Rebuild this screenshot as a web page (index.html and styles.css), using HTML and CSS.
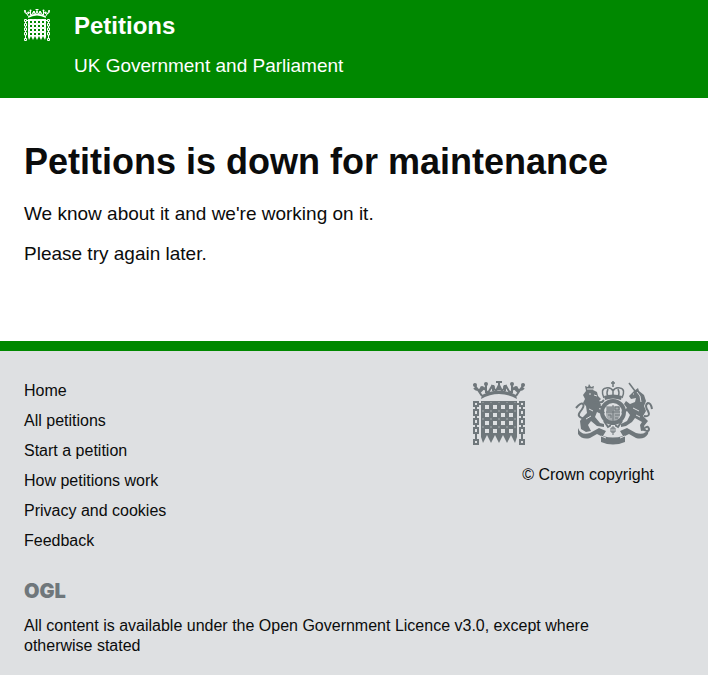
FILE: index.html
```
<!DOCTYPE html>
<html lang="en">
<head>
  <meta charset="UTF-8">
  <meta name="viewport" content="width=device-width, initial-scale=1.0">
  <title>Petitions is down for maintenance</title>
  <link rel="stylesheet" href="styles.css">
</head>
<body>
  <svg class="symbols" aria-hidden="true">
    <symbol id="portcullis" viewBox="0 0 52 64">
      <!-- crown -->
      <path d="M8 18Q26 8 44 18L43 14Q26 5 9 14Z" fill="currentColor"/>
      <path d="M9 15L1 3M43 15L51 3M13 12L13 2M39 12L39 2M20 10L20 4M32 10L32 4M26 9V1M23 1H29M1 7Q5 11 9 7M51 7Q47 11 43 7M7 11L11 7L15 12L19 5L23 10L26 4L29 10L33 5L37 12L41 7L45 11" fill="none" stroke="currentColor" stroke-width="2"/>
      <g fill="currentColor"><circle cx="2" cy="4" r="2"/><circle cx="50" cy="4" r="2"/><circle cx="9" cy="7" r="2"/><circle cx="43" cy="7" r="2"/><circle cx="13" cy="3" r="2"/><circle cx="39" cy="3" r="2"/><circle cx="20" cy="6" r="2"/><circle cx="32" cy="6" r="2"/></g>
      <!-- gate -->
      <path fill="currentColor" fill-rule="evenodd" d="M8 20H44V56L42 62L38 54L34 62L30 54L26 62L22 54L18 62L14 54L10 62L8 56ZM12 24h4v4h-4zM20 24h4v4h-4zM28 24h4v4h-4zM36 24h4v4h-4zM12 32h4v4h-4zM20 32h4v4h-4zM28 32h4v4h-4zM36 32h4v4h-4zM12 40h4v4h-4zM20 40h4v4h-4zM28 40h4v4h-4zM36 40h4v4h-4zM12 48h4v4h-4zM20 48h4v4h-4zM28 48h4v4h-4zM36 48h4v4h-4zM9.500 21.500h1v1h-1zM17.500 21.500h1v1h-1zM25.500 21.500h1v1h-1zM33.500 21.500h1v1h-1zM41.500 21.500h1v1h-1zM9.500 29.500h1v1h-1zM17.500 29.500h1v1h-1zM25.500 29.500h1v1h-1zM33.500 29.500h1v1h-1zM41.500 29.500h1v1h-1zM9.500 37.500h1v1h-1zM17.500 37.500h1v1h-1zM25.500 37.500h1v1h-1zM33.500 37.500h1v1h-1zM41.500 37.500h1v1h-1zM9.500 45.500h1v1h-1zM17.500 45.500h1v1h-1zM25.500 45.500h1v1h-1zM33.500 45.500h1v1h-1zM41.500 45.500h1v1h-1z"/>
      <path d="M4 23H48" stroke="currentColor" stroke-width="2"/>
      <!-- chains -->
      <g fill="none" stroke="currentColor" stroke-width="2"><path d="M1 21h4v4h-4zM1 29h4v5h-4zM1 38h4v5h-4zM1 47h4v5h-4zM1 59h4v4h-4zM47 21h4v4h-4zM47 29h4v5h-4zM47 38h4v5h-4zM47 47h4v5h-4zM47 59h4v4h-4z"/><path d="M3 25v4M3 34v4M3 43v4M3 52v7M49 25v4M49 34v4M49 43v4M49 52v7"/></g>
    </symbol>
    <symbol id="royal-arms" viewBox="0 0 78 64">
      <!-- crown -->
      <path d="M38 0v6M36 2h4M29 17Q25 8 31 7Q36 6 38 10Q40 6 45 7Q51 8 47 17M38 8v8M33 8Q31 12 33 16M43 8Q45 12 43 16" fill="none" stroke="currentColor" stroke-width="1.500"/>
      <path d="M29 15Q38 12 47 15L46 19Q38 16 30 19Z" fill="currentColor"/>
      <!-- garter and shield -->
      <circle cx="38" cy="31" r="11" fill="none" stroke="currentColor" stroke-width="4"/>
      <path d="M31 25h14v8q0 6-7 8q-7-2-7-8z" fill="currentColor" opacity=".5"/>
      <path d="M38 24v17M31 31h14M32 27h5M32 29h5M40 26h4v3h-4zM33 34h3v3M40 34h5M40 37h3" fill="none" stroke="currentColor"/>
      <path d="M29 40L33 46L38 43L43 46L47 40" fill="none" stroke="currentColor" stroke-width="2"/>
      <!-- lion -->
      <path d="M11 10L10 5L13 6L14 3L16 6L19 5L18 9L22 11L23 15L26 18L24 20L26 24L24 28L30 31L28 34L22 31L20 36L25 42L29 43V46L22 45L16 40L13 44L16 50L11 51L6 48L5 40L8 36L12 32L11 25L8 22L10 18L8 14Z" fill="currentColor"/>
      <path d="M18 22L27 21L29 19M20 26L27 26" fill="none" stroke="currentColor" stroke-width="2"/>
      <path d="M10 38Q1 36 5 31Q10 25 8 23Q6 21 1 27" fill="none" stroke="currentColor" stroke-width="2"/>
      <path d="M12 8h6M14 13h2M19 14l3 1M14 28l4 2M11 38l5-3" fill="none" stroke="#dee0e2"/>
      <!-- unicorn -->
      <path d="M54 2L60 10" stroke="currentColor" stroke-width="1.500"/>
      <path d="M59 10L63 7L64 10L69 14L71 20L69 25L71 30L68 35L73 40L69 45L71 49L66 50L65 44L67 41L60 37L57 41L51 45L46 46V43L52 40L55 34L52 30L48 33L46 31L52 27L49 23L51 20L55 23L60 21L61 17L56 18L54 15Z" fill="currentColor"/>
      <path d="M62 11l3 4l1 6M58 27l6 3M61 34l4 2M58 13h1" fill="none" stroke="#dee0e2"/>
      <path d="M69 35Q76 36 73 30Q69 24 73 22Q76 22 77 28M67 48Q74 52 74 48Q73 44 70 47" fill="none" stroke="currentColor" stroke-width="2"/>
      <!-- motto scroll -->
      <path d="M3 47Q6 55 15 52L24 47L31 50L28 55Q38 58 48 55L45 50L52 47L61 52Q70 55 74 47L73 53Q69 59 61 57L54 53L50 55V61Q38 66 26 61V55L22 53L15 57Q7 59 3 53Z" fill="currentColor"/>
      <path d="M26 55L31 57M50 55L45 57" stroke="#dee0e2"/>
      <path d="M38 44v10M35 49h6" stroke="#dee0e2" stroke-width="4"/>
      <path d="M38 45v9M36 47h4v4h-4z" fill="none" stroke="currentColor"/>
    </symbol>
  </svg>

  <header class="header">
    <div class="container header-inner">
      <svg class="header-logo" aria-hidden="true"><use href="#portcullis"/></svg>
      <div>
        <a class="header-title" href="/">Petitions</a>
        <p class="header-tagline">UK Government and Parliament</p>
      </div>
    </div>
  </header>

  <main class="container content">
    <h1>Petitions is down for maintenance</h1>
    <p>We know about it and we're working on it.</p>
    <p>Please try again later.</p>
  </main>

  <footer class="footer">
    <div class="container">
      <div class="footer-top">
        <ul class="footer-nav">
          <li><a href="/">Home</a></li>
          <li><a href="/petitions">All petitions</a></li>
          <li><a href="/petitions/check">Start a petition</a></li>
          <li><a href="/help">How petitions work</a></li>
          <li><a href="/privacy">Privacy and cookies</a></li>
          <li><a href="/feedback">Feedback</a></li>
        </ul>
        <div class="footer-crests">
          <div class="crests">
            <svg class="crest-parliament" role="img" aria-label="UK Parliament"><use href="#portcullis"/></svg>
            <svg class="crest-government" role="img" aria-label="HM Government"><use href="#royal-arms"/></svg>
          </div>
          <p class="copyright">© Crown copyright</p>
        </div>
      </div>
      <div class="licence">
        <span class="ogl">OGL</span>
        <p>All content is available under the Open Government Licence v3.0, except where otherwise stated</p>
      </div>
    </div>
  </footer>
</body>
</html>
```
FILE: styles.css
```
body {
  margin: 0;
  min-height: 100vh;
  display: flex;
  flex-direction: column;
  font-family: "Liberation Sans", Arial, sans-serif;
  font-size: 19px;
  line-height: 25px;
  color: #0b0c0c;
  background-color: #fff;
}
p {
  margin: 0;
}
a {
  color: inherit;
  text-decoration: none;
}
.symbols {
  display: none;
}
.container {
  padding: 0 24px;
}
.header {
  color: #fff;
  background-color: #008800;
  padding: 8px 0 20px;
}
.header-inner {
  display: flex;
  gap: 24px;
}
.header-logo {
  width: 26px;
  height: 34px;
}
.header-title {
  display: block;
  font-size: 24px;
  font-weight: bold;
  line-height: 35px;
  margin-bottom: 10px;
}
.content {
  padding-top: 40px;
  padding-bottom: 75px;
}
.content h1 {
  margin: 0 0 15px;
  font-size: 36px;
  line-height: 48px;
}
.content p + p {
  margin-top: 15px;
}
.footer {
  flex: 1;
  border-top: 10px solid #008800;
  background-color: #dee0e2;
  font-size: 16px;
  line-height: 20px;
  padding: 30px 0 20px;
}
.footer-top {
  display: flex;
  justify-content: space-between;
}
.footer-nav {
  list-style: none;
  margin: 0;
  padding: 0;
}
.footer-nav li {
  margin-bottom: 10px;
}
.footer-crests {
  padding-right: 30px;
  text-align: right;
}
.crests {
  display: flex;
  justify-content: flex-end;
  gap: 50px;
  margin-bottom: 20px;
  padding-right: 1px;
  color: #6f777b;
}
.crest-parliament {
  width: 52px;
  height: 64px;
}
.crest-government {
  width: 78px;
  height: 64px;
}
.licence {
  padding-top: 20px;
}
.ogl {
  display: block;
  margin-bottom: 15px;
  color: #6f777b;
  font-family: Inter, sans-serif;
  font-size: 20px;
  font-weight: 900;
}
.licence p {
  max-width: 600px;
}
```
